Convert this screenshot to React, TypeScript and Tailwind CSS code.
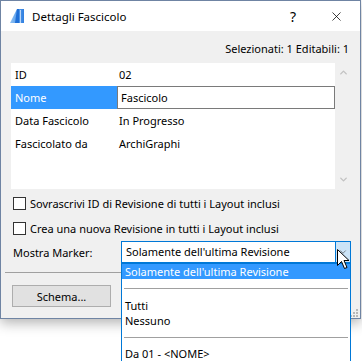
import { ChevronDown, ChevronUp, X } from 'lucide-react'

// Windows-style "Dettagli Fascicolo" dialog with an open combo list.
const rows = [
  { label: 'ID', value: '02' },
  { label: 'Nome', value: 'Fascicolo', editing: true },
  { label: 'Data Fascicolo', value: 'In Progresso' },
  { label: 'Fascicolato da', value: 'ArchiGraphi' },
]

function AppIcon() {
  return (
    <svg width="15" height="15" viewBox="0 0 15 15">
      <defs>
        <linearGradient id="g1" x1="0" y1="0" x2="1" y2="0">
          <stop offset="0" stopColor="#8fc3f5" />
          <stop offset="1" stopColor="#2f7fe0" />
        </linearGradient>
      </defs>
      <path d="M0 14 L7 0 L14 0 L14 14 Z" fill="url(#g1)" />
      <path d="M7 0 L9 0 L9 14 L5 14 Z" fill="#1f6fd6" />
      <path d="M10 1 L10.8 1 L10.8 14 L10 14 Z" fill="#ffffff" opacity="0.8" />
    </svg>
  )
}

function Cursor() {
  return (
    <svg width="13" height="21" viewBox="0 0 13 21">
      <path
        d="M0.5 0.5 L0.5 16.5 L4.5 12.5 L7.5 19.5 L10 18.5 L7 11.5 L12 11.5 Z"
        fill="#fff"
        stroke="#000"
        strokeWidth="1"
        strokeLinejoin="miter"
      />
    </svg>
  )
}

function Checkbox({ label }: { label: string }) {
  return (
    <div className="flex h-[25px] items-center gap-[4px] pl-[12px]">
      <div className="h-[13px] w-[13px] border border-[#333] bg-white" />
      <span>{label}</span>
    </div>
  )
}

export default function App() {
  return (
    <div className="relative h-[361px] w-[362px] overflow-hidden bg-white font-['Segoe_UI','Noto_Sans',sans-serif] text-[11px] leading-[15px] text-black">
      <div className="flex h-[319px] w-[361px] flex-col border border-[#6f84a3] bg-[#f0f0f0] shadow-[0_4px_12px_rgba(0,0,0,0.3)]">
        {/* title bar */}
        <div className="flex h-[30px] items-center bg-white pl-[9px]">
          <AppIcon />
          <span className="ml-[7px] text-[11.5px]">Dettagli Fascicolo</span>
          <span className="ml-auto mr-[33px] text-[14px]">?</span>
          <X className="mr-[16px] h-[15px] w-[15px]" strokeWidth={1.2} />
        </div>

        <div className="mt-[10px] flex justify-end pr-[11px]">Selezionati: 1 Editabili: 1</div>

        {/* property list */}
        <div className="mt-[7px] ml-[10px] flex h-[126px]">
          <div className="w-[324px] bg-white">
            {rows.map((r) => (
              <div key={r.label} className="flex h-[23px] items-center">
                <div
                  className={
                    r.editing
                      ? 'flex h-full w-[106px] items-center bg-[#3399ff] pl-[4px] text-white'
                      : 'w-[106px] pl-[4px]'
                  }
                >
                  {r.label}
                </div>
                {r.editing ? (
                  <div className="flex h-full flex-1 items-center border border-[#7a7a7a] pl-[3px]">{r.value}</div>
                ) : (
                  <div className="pl-[2px]">{r.value}</div>
                )}
              </div>
            ))}
          </div>
          <div className="flex w-[17px] flex-col items-center justify-between py-[4px]">
            <ChevronUp className="h-[11px] w-[11px] text-[#c2c2c2]" strokeWidth={3} />
            <ChevronDown className="h-[11px] w-[11px] text-[#c2c2c2]" strokeWidth={3} />
          </div>
        </div>

        <div className="mt-[2px]">
          <Checkbox label="Sovrascrivi ID di Revisione di tutti i Layout inclusi" />
          <Checkbox label="Crea una nuova Revisione in tutti i Layout inclusi" />
        </div>

        <div className="flex h-[22px] items-center pl-[12px]">
          <span className="w-[108px]">Mostra Marker:</span>
          <div className="flex h-[22px] w-[230px] border border-[#0078d7] bg-white">
            <span className="flex-1 pl-[4px] leading-[20px]">Solamente dell'ultima Revisione</span>
            <div className="flex w-[15px] items-center justify-center border-l border-[#0078d7] bg-[#cce4f7]">
              <ChevronDown className="h-[10px] w-[10px] text-[#444]" strokeWidth={1.5} />
            </div>
          </div>
        </div>

        <div className="mt-[9px] ml-[4px] h-px w-[117px] bg-[#a0a0a0]" />

        <div className="mt-[12px] ml-[11px] flex h-[22px] w-[99px] items-center justify-center border border-[#adadad] bg-[#e1e1e1]">
          Schema...
        </div>

        <div className="ml-auto mt-auto mr-[2px] mb-[1px] grid grid-cols-3 gap-[1px]">
          <span />
          <span />
          <span className="h-[2px] w-[2px] bg-[#b8b8b8]" />
          <span />
          <span className="h-[2px] w-[2px] bg-[#b8b8b8]" />
          <span className="h-[2px] w-[2px] bg-[#b8b8b8]" />
          <span className="h-[2px] w-[2px] bg-[#b8b8b8]" />
          <span className="h-[2px] w-[2px] bg-[#b8b8b8]" />
          <span className="h-[2px] w-[2px] bg-[#b8b8b8]" />
        </div>
      </div>

      {/* open combo list */}
      <div className="absolute left-[121px] top-[263px] h-[110px] w-[230px] border border-[#0078d7] bg-white">
        <div className="h-[15px] bg-[#3399ff] pl-[3px] leading-[15px] text-white">Solamente dell'ultima Revisione</div>
        <div className="flex h-[19px] items-center px-[2px]">
          <div className="h-px w-full bg-[#a0a0a0]" />
        </div>
        <div className="h-[15px] pl-[3px] leading-[15px]">Tutti</div>
        <div className="h-[15px] pl-[3px] leading-[15px]">Nessuno</div>
        <div className="flex h-[18px] items-center px-[2px]">
          <div className="h-px w-full bg-[#a0a0a0]" />
        </div>
        <div className="h-[15px] pl-[3px] leading-[15px]">Da 01 - &lt;NOME&gt;</div>
      </div>

      <div className="absolute left-[337px] top-[249px]">
        <Cursor />
      </div>
    </div>
  )
}
